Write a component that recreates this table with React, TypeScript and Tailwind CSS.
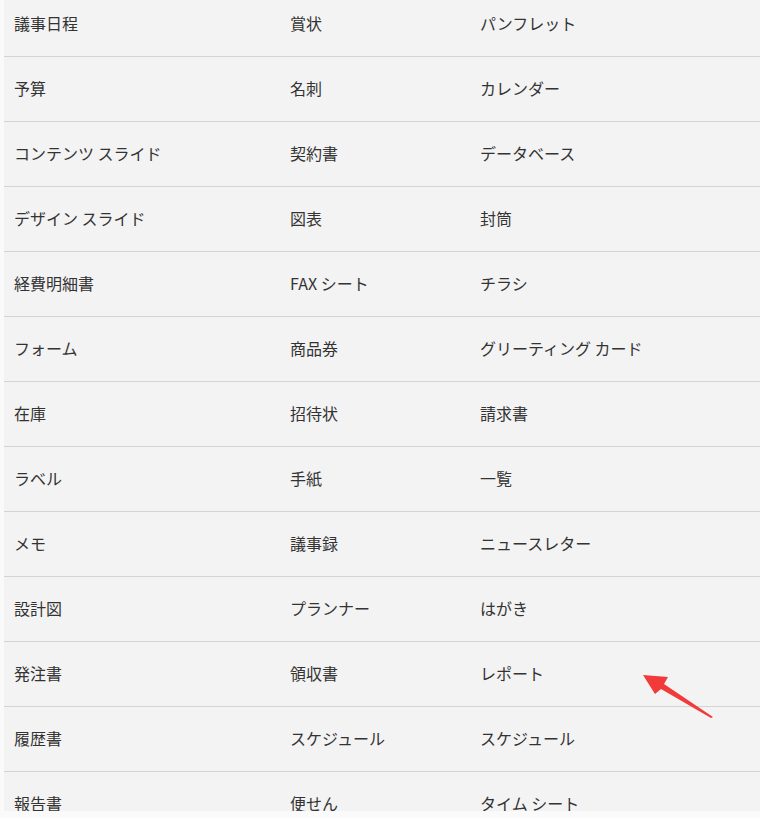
import React from "react";

const rows: [string, string, string][] = [
  ["議事日程", "賞状", "パンフレット"],
  ["予算", "名刺", "カレンダー"],
  ["コンテンツ スライド", "契約書", "データベース"],
  ["デザイン スライド", "図表", "封筒"],
  ["経費明細書", "FAX シート", "チラシ"],
  ["フォーム", "商品券", "グリーティング カード"],
  ["在庫", "招待状", "請求書"],
  ["ラベル", "手紙", "一覧"],
  ["メモ", "議事録", "ニュースレター"],
  ["設計図", "プランナー", "はがき"],
  ["発注書", "領収書", "レポート"],
  ["履歴書", "スケジュール", "スケジュール"],
  ["報告書", "便せん", "タイム シート"],
];

export default function App() {
  return (
    <div
      className="relative w-[760px] h-[818px] overflow-hidden bg-[#fafafa]"
      style={{ fontFamily: '"Noto Sans CJK JP", "Noto Sans", sans-serif' }}
    >
      <div className="ml-[4px] mt-[-9px] h-[820px] overflow-hidden">
        <div className="bg-[#f3f3f3] h-[820px]">
          {rows.map((r, i) => (
            <div
              key={i}
              className="grid grid-cols-[286px_190px_1fr] h-[65px] border-t border-[#d4d4d4] items-center text-[16px] text-[#333333] pb-[2px]"
            >
              <div className="pl-[10px]">{r[0]}</div>
              <div>{r[1]}</div>
              <div>{r[2]}</div>
            </div>
          ))}
        </div>
      </div>
      <div className="absolute left-0 top-[811px] w-full h-[7px] bg-[#fafafa]" />
      <svg
        className="absolute left-[640px] top-[670px]"
        width="80"
        height="52"
        viewBox="0 0 80 52"
      >
        <polygon
          points="3,5 28,7 24,14 73,47 71,48 21,19 15,24"
          fill="#f23a3a"
        />
      </svg>
    </div>
  );
}
